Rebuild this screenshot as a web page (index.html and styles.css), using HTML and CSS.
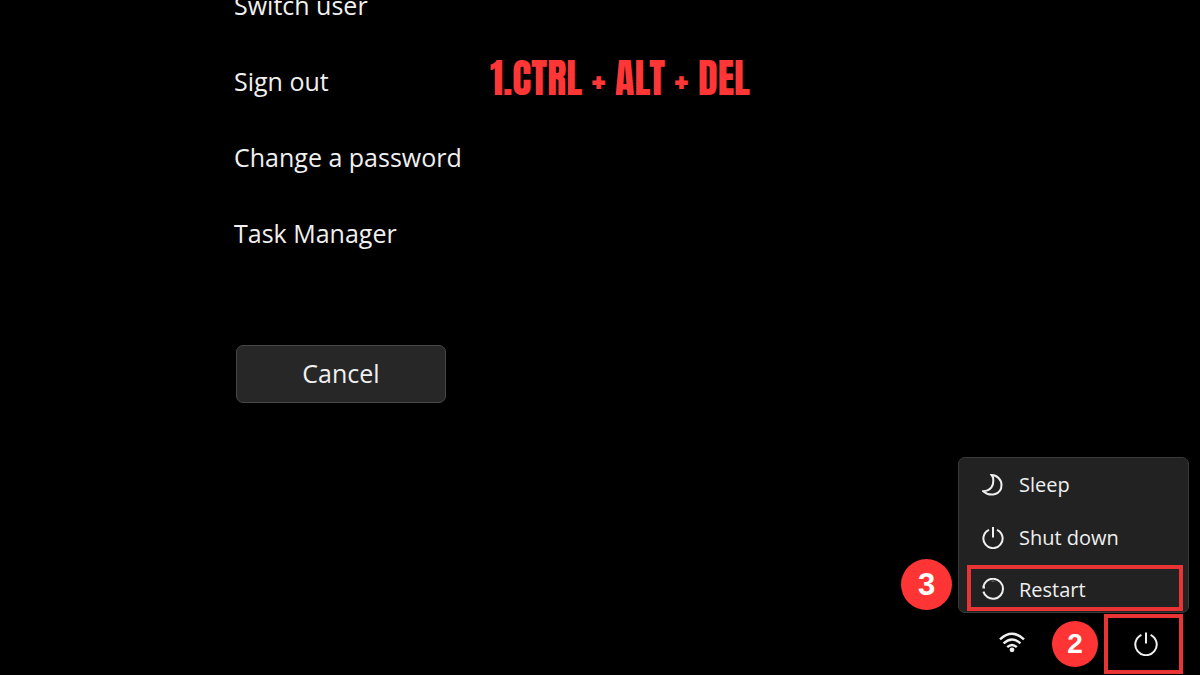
FILE: index.html
```html
<!DOCTYPE html>
<html lang="en">
<head>
    <meta charset="UTF-8">
    <meta name="viewport" content="width=device-width, initial-scale=1.0">
    <title>Security options</title>
    <link rel="stylesheet" href="styles.css">
</head>
<body>
    <main class="options">
        <nav class="option-list">
            <a class="option" href="#switch">Switch user</a>
            <a class="option" href="#signout">Sign out</a>
            <a class="option" href="#password">Change a password</a>
            <a class="option" href="#taskmgr">Task Manager</a>
        </nav>
        <button class="cancel" type="button">Cancel</button>
    </main>

    <h1 class="step-title">1.CTRL + ALT + DEL</h1>

    <footer class="tray">
        <svg class="wifi" viewBox="0 0 26 24" aria-hidden="true">
            <path d="M1 7.4Q13-3.8 25 7.4M4.6 11.4Q13 3.6 21.4 11.4M8.2 15.2Q13 10.8 17.8 15.2"/>
            <circle cx="13" cy="17.8" r="2.4"/>
        </svg>
        <span class="badge">2</span>
        <div class="power">
            <button class="power-button marked" type="button" aria-label="Power">
                <svg class="icon icon-power" viewBox="0 0 24 24" aria-hidden="true">
                    <path d="M7.4 2.8A10.7 10.7 0 1 0 16.6 2.8M12 .5v11"/>
                </svg>
            </button>
            <div class="power-menu">
                <button class="menu-item" type="button">
                    <svg class="icon" viewBox="0 0 22 22" aria-hidden="true">
                        <path d="M9.5 1C15 1 19.5 5.5 19.5 11C19.5 20.5 8.5 23.5 1.2 17.2C8.5 16.5 12.5 12 11 3.5Z"/>
                    </svg>
                    Sleep
                </button>
                <button class="menu-item" type="button">
                    <svg class="icon" viewBox="0 0 22 22" aria-hidden="true">
                        <path d="M7 2.8A9.6 9.6 0 1 0 15 2.8M11 0v10.5"/>
                    </svg>
                    Shut down
                </button>
                <div class="menu-row">
                    <button class="menu-item marked" type="button">
                        <svg class="icon" viewBox="0 0 22 22" aria-hidden="true">
                            <path d="M1.1 9.4A10 10 0 0 1 21 11A10 10 0 0 1 1.4 13.6M.5 9.4h2.5"/>
                            <path class="faint" d="M9.5 3.2h3"/>
                        </svg>
                        Restart
                    </button>
                    <span class="badge badge-large">3</span>
                </div>
            </div>
        </div>
    </footer>
</body>
</html>
```
FILE: styles.css
```css
* {
    box-sizing: border-box;
}

body {
    display: flex;
    flex-direction: column;
    min-height: 100vh;
    margin: 0;
    overflow: hidden;
    background-color: #000;
    color: #f0f0f0;
    font-family: "Segoe UI", "Open Sans", "Noto Sans", sans-serif;
}

button {
    font-family: inherit;
    color: inherit;
    cursor: pointer;
}

.options {
    flex: 1;
    padding-left: 234px;
}

.option-list {
    display: flex;
    flex-direction: column;
    align-items: flex-start;
    margin-top: -33px;
}

.option {
    font-size: 25px;
    line-height: 76px;
    color: inherit;
    text-decoration: none;
}

.cancel {
    width: 210px;
    height: 58px;
    margin: 74px 2px 0;
    padding: 0 0 2px;
    border: 1px solid #484848;
    border-radius: 7px;
    background-color: #272727;
    font-size: 25px;
}

/* instruction laid over the screen */
.step-title {
    position: absolute;
    top: 48px;
    left: 490px;
    margin: 0;
    color: #ff3636;
    font-family: Anton, "Liberation Sans Narrow", "Liberation Sans", sans-serif;
    font-size: 40px;
    font-weight: normal;
    line-height: 60px;
    white-space: nowrap;
}

.tray {
    display: flex;
    justify-content: flex-end;
    align-items: center;
    padding: 0 17px 1px;
}

.wifi {
    width: 26px;
    height: 24px;
    margin-right: 27px;
    fill: none;
    stroke: #f0f0f0;
    stroke-width: 2.4;
}

.wifi circle {
    fill: #f0f0f0;
    stroke: none;
}

.badge {
    display: flex;
    justify-content: center;
    align-items: center;
    width: 46px;
    height: 46px;
    margin-right: 6px;
    border-radius: 50%;
    background-color: #ff3434;
    color: #fff;
    font-family: "Liberation Sans", Arial, sans-serif;
    font-size: 28px;
    font-weight: bold;
}

.power {
    position: relative;
}

.power-button {
    display: flex;
    justify-content: center;
    align-items: center;
    width: 79px;
    height: 60px;
    padding: 0 0 0 4px;
    background: none;
}

.icon {
    width: 22px;
    height: 22px;
    fill: none;
    stroke: #f0f0f0;
    stroke-width: 2;
}

.icon-power {
    width: 24px;
    height: 24px;
}

.faint {
    stroke: #777;
    stroke-width: 1;
}

.power-menu {
    position: absolute;
    right: -6px;
    bottom: 61px;
    width: 231px;
    border: 1px solid #3a3a3a;
    border-radius: 7px;
    background-color: #222;
}

.menu-item {
    display: flex;
    align-items: center;
    gap: 15px;
    width: 100%;
    height: 53px;
    padding: 0 23px;
    border: 0;
    background: none;
    font-size: 20px;
}

.menu-row {
    position: relative;
    margin: 1px 5px 1px 8px;
}

.menu-row .menu-item {
    height: 46px;
    padding: 2px 11px 0;
}

.power-button.marked,
.menu-row .marked {
    border: 4px solid #e83434;
}

.badge-large {
    position: absolute;
    right: 100%;
    top: -6px;
    width: 51px;
    height: 51px;
    margin-right: 15px;
    font-size: 31px;
}
```
